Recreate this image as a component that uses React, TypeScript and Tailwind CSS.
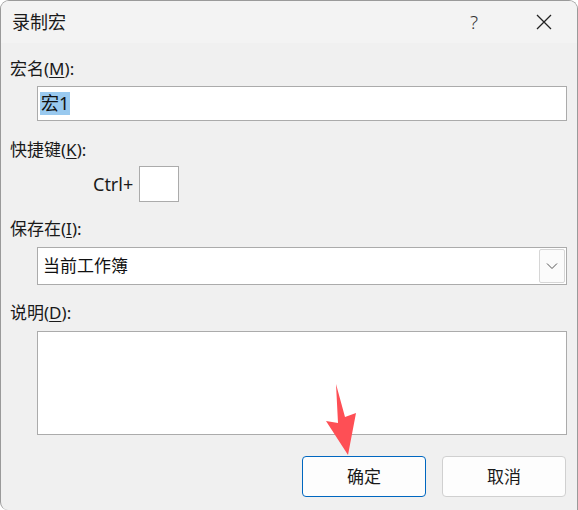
import React from 'react';

const font = { fontFamily: '"Noto Sans", "Noto Sans CJK SC", sans-serif' };

const Label: React.FC<{ text: string; mn: string; className?: string }> = ({ text, mn, className }) => (
  <div className={`h-[24px] leading-[24px] text-[17px] text-[#1a1a1a] ${className ?? ''}`}>
    {text}(<span className="underline underline-offset-2">{mn}</span>):
  </div>
);

const App: React.FC = () => {
  return (
    <div className="w-[578px] h-[510px] bg-[#f0f0f0] overflow-hidden relative rounded-t-[9px] rounded-bl-[8px] border-t border-l border-r border-[#9a9a9a]" style={font}>
      {/* Title bar */}
      <div className="h-[42px] bg-[#f3f3f3] flex items-center pl-[11px] pr-[20px]">
        <span className="text-[18px] text-[#1a1a1a]">录制宏</span>
        <span className="ml-auto text-[19px] text-[#333] font-light mr-[58px]">?</span>
        <svg width="16" height="16" viewBox="0 0 16 16" className="mr-[5px]">
          <path d="M1 1 L15 15 M15 1 L1 15" stroke="#222" strokeWidth="1.3" fill="none" />
        </svg>
      </div>

      {/* Body */}
      <div className="flex flex-col pl-[9px] pr-[10px]">
        <Label text="宏名" mn="M" className="mt-[14px]" />
        <div className="mt-[5px] ml-[27px] h-[35px] bg-white border border-[#ababab] flex items-center px-[2px]">
          <span className="bg-[#99c9ef] text-[18px] leading-[23px] text-[#111] px-[1px]">宏1</span>
        </div>

        <Label text="快捷键" mn="K" className="mt-[17px]" />
        <div className="mt-[4px] ml-[83px] flex items-center gap-[6px]">
          <span className="text-[18px] text-[#1a1a1a]">Ctrl+</span>
          <div className="w-[40px] h-[36px] bg-white border border-[#ababab]" />
        </div>

        <Label text="保存在" mn="I" className="mt-[15px]" />
        <div className="mt-[6px] ml-[27px] h-[38px] bg-white border border-[#ababab] flex items-center pl-[5px] pr-[1px]">
          <span className="text-[17px] text-[#111]">当前工作簿</span>
          <div className="ml-auto w-[26px] h-[34px] bg-[#fbfbfb] border border-[#d6d6d6] rounded-[2px] flex items-center justify-center">
            <svg width="12" height="8" viewBox="0 0 12 8">
              <path d="M1 1.5 L6 6.5 L11 1.5" stroke="#555" strokeWidth="1" fill="none" />
            </svg>
          </div>
        </div>

        <Label text="说明" mn="D" className="mt-[16px]" />
        <div className="mt-[6px] ml-[27px] h-[104px] bg-white border border-[#ababab]" />

        <div className="mt-[21px] flex justify-end gap-[16px] pr-[1px]">
          <button className="w-[124px] h-[41px] bg-[#fdfdfd] border border-[#0067c0] rounded-[4px] text-[17px] text-[#1a1a1a]">确定</button>
          <button className="w-[124px] h-[41px] bg-[#fdfdfd] border border-[#d0d0d0] rounded-[4px] text-[17px] text-[#1a1a1a]">取消</button>
        </div>
      </div>

      {/* Red annotation arrow */}
      <svg className="absolute left-0 top-0 pointer-events-none" width="578" height="510">
        <polygon points="335,383 344,416 355,412 347,454 325,420 337,422" fill="#fe4f55" />
      </svg>
    </div>
  );
};

export default App;
